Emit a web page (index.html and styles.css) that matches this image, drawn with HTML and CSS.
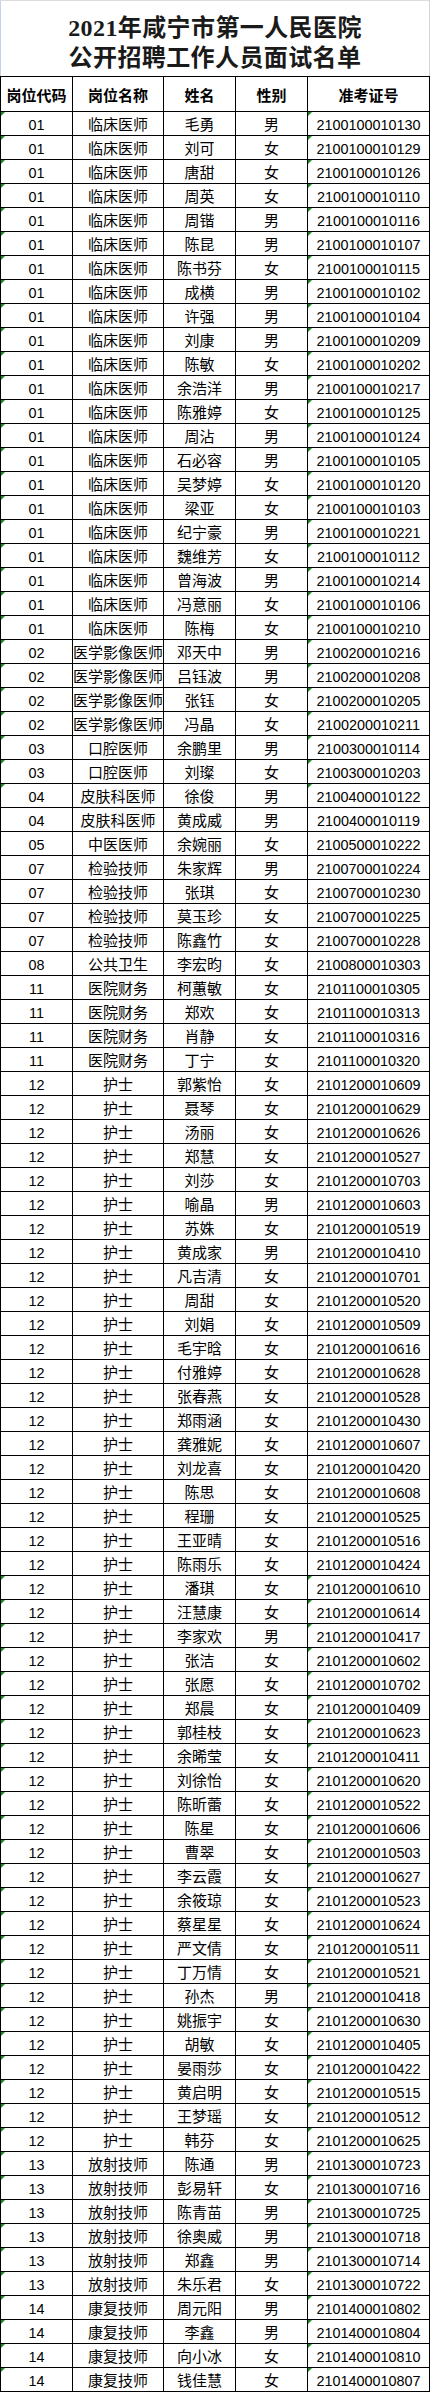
FILE: index.html
```html
<!DOCTYPE html>
<html lang="zh-CN">
<head>
<meta charset="utf-8">
<title>2021年咸宁市第一人民医院公开招聘工作人员面试名单</title>
<link rel="stylesheet" href="styles.css">
</head>
<body>
<div class="sheet">
  <div class="title">2021年咸宁市第一人民医院<br>公开招聘工作人员面试名单</div>
  <table class="list">
    <colgroup><col class="w1"><col class="w2"><col class="w3"><col class="w4"><col class="w5"></colgroup>
    <thead>
      <tr><th>岗位代码</th><th>岗位名称</th><th>姓名</th><th>性别</th><th>准考证号</th></tr>
    </thead>
    <tbody>
      <tr class="m"><td class="a">01</td><td>临床医师</td><td>毛勇</td><td>男</td><td class="e">2100100010130</td></tr>
      <tr class="m"><td class="a">01</td><td>临床医师</td><td>刘可</td><td>女</td><td class="e">2100100010129</td></tr>
      <tr class="m"><td class="a">01</td><td>临床医师</td><td>唐甜</td><td>女</td><td class="e">2100100010126</td></tr>
      <tr class="m"><td class="a">01</td><td>临床医师</td><td>周英</td><td>女</td><td class="e">2100100010110</td></tr>
      <tr class="m"><td class="a">01</td><td>临床医师</td><td>周锴</td><td>男</td><td class="e">2100100010116</td></tr>
      <tr class="m"><td class="a">01</td><td>临床医师</td><td>陈昆</td><td>男</td><td class="e">2100100010107</td></tr>
      <tr class="m"><td class="a">01</td><td>临床医师</td><td>陈书芬</td><td>女</td><td class="e">2100100010115</td></tr>
      <tr class="m"><td class="a">01</td><td>临床医师</td><td>成横</td><td>男</td><td class="e">2100100010102</td></tr>
      <tr class="m"><td class="a">01</td><td>临床医师</td><td>许强</td><td>男</td><td class="e">2100100010104</td></tr>
      <tr class="m"><td class="a">01</td><td>临床医师</td><td>刘康</td><td>男</td><td class="e">2100100010209</td></tr>
      <tr class="m"><td class="a">01</td><td>临床医师</td><td>陈敏</td><td>女</td><td class="e">2100100010202</td></tr>
      <tr class="m"><td class="a">01</td><td>临床医师</td><td>余浩洋</td><td>男</td><td class="e">2100100010217</td></tr>
      <tr class="m"><td class="a">01</td><td>临床医师</td><td>陈雅婷</td><td>女</td><td class="e">2100100010125</td></tr>
      <tr class="m"><td class="a">01</td><td>临床医师</td><td>周沾</td><td>男</td><td class="e">2100100010124</td></tr>
      <tr class="m"><td class="a">01</td><td>临床医师</td><td>石必容</td><td>男</td><td class="e">2100100010105</td></tr>
      <tr class="m"><td class="a">01</td><td>临床医师</td><td>吴梦婷</td><td>女</td><td class="e">2100100010120</td></tr>
      <tr class="m"><td class="a">01</td><td>临床医师</td><td>梁亚</td><td>女</td><td class="e">2100100010103</td></tr>
      <tr class="m"><td class="a">01</td><td>临床医师</td><td>纪宁豪</td><td>男</td><td class="e">2100100010221</td></tr>
      <tr class="m"><td class="a">01</td><td>临床医师</td><td>魏维芳</td><td>女</td><td class="e">2100100010112</td></tr>
      <tr class="m"><td class="a">01</td><td>临床医师</td><td>曾海波</td><td>男</td><td class="e">2100100010214</td></tr>
      <tr class="m"><td class="a">01</td><td>临床医师</td><td>冯意丽</td><td>女</td><td class="e">2100100010106</td></tr>
      <tr class="m"><td class="a">01</td><td>临床医师</td><td>陈梅</td><td>女</td><td class="e">2100100010210</td></tr>
      <tr class="m"><td class="a">02</td><td>医学影像医师</td><td>邓天中</td><td>男</td><td class="e">2100200010216</td></tr>
      <tr class="m"><td class="a">02</td><td>医学影像医师</td><td>吕钰波</td><td>男</td><td class="e">2100200010208</td></tr>
      <tr class="m"><td class="a">02</td><td>医学影像医师</td><td>张钰</td><td>女</td><td class="e">2100200010205</td></tr>
      <tr class="m"><td class="a">02</td><td>医学影像医师</td><td>冯晶</td><td>女</td><td class="e">2100200010211</td></tr>
      <tr class="m"><td class="a">03</td><td>口腔医师</td><td>余鹏里</td><td>男</td><td class="e">2100300010114</td></tr>
      <tr class="m"><td class="a">03</td><td>口腔医师</td><td>刘璨</td><td>女</td><td class="e">2100300010203</td></tr>
      <tr class="m"><td class="a">04</td><td>皮肤科医师</td><td>徐俊</td><td>男</td><td class="e">2100400010122</td></tr>
      <tr><td class="a">04</td><td>皮肤科医师</td><td>黄成威</td><td>男</td><td class="e">2100400010119</td></tr>
      <tr><td class="a">05</td><td>中医医师</td><td>余婉丽</td><td>女</td><td class="e">2100500010222</td></tr>
      <tr><td class="a">07</td><td>检验技师</td><td>朱家辉</td><td>男</td><td class="e">2100700010224</td></tr>
      <tr><td class="a">07</td><td>检验技师</td><td>张琪</td><td>女</td><td class="e">2100700010230</td></tr>
      <tr><td class="a">07</td><td>检验技师</td><td>莫玉珍</td><td>女</td><td class="e">2100700010225</td></tr>
      <tr><td class="a">07</td><td>检验技师</td><td>陈鑫竹</td><td>女</td><td class="e">2100700010228</td></tr>
      <tr><td class="a">08</td><td>公共卫生</td><td>李宏昀</td><td>女</td><td class="e">2100800010303</td></tr>
      <tr><td class="a">11</td><td>医院财务</td><td>柯蕙敏</td><td>女</td><td class="e">2101100010305</td></tr>
      <tr><td class="a">11</td><td>医院财务</td><td>郑欢</td><td>女</td><td class="e">2101100010313</td></tr>
      <tr><td class="a">11</td><td>医院财务</td><td>肖静</td><td>女</td><td class="e">2101100010316</td></tr>
      <tr><td class="a">11</td><td>医院财务</td><td>丁宁</td><td>女</td><td class="e">2101100010320</td></tr>
      <tr><td class="a">12</td><td>护士</td><td>郭紫怡</td><td>女</td><td class="e">2101200010609</td></tr>
      <tr><td class="a">12</td><td>护士</td><td>聂琴</td><td>女</td><td class="e">2101200010629</td></tr>
      <tr><td class="a">12</td><td>护士</td><td>汤丽</td><td>女</td><td class="e">2101200010626</td></tr>
      <tr><td class="a">12</td><td>护士</td><td>郑慧</td><td>女</td><td class="e">2101200010527</td></tr>
      <tr><td class="a">12</td><td>护士</td><td>刘莎</td><td>女</td><td class="e">2101200010703</td></tr>
      <tr><td class="a">12</td><td>护士</td><td>喻晶</td><td>男</td><td class="e">2101200010603</td></tr>
      <tr><td class="a">12</td><td>护士</td><td>苏姝</td><td>女</td><td class="e">2101200010519</td></tr>
      <tr><td class="a">12</td><td>护士</td><td>黄成家</td><td>男</td><td class="e">2101200010410</td></tr>
      <tr><td class="a">12</td><td>护士</td><td>凡吉清</td><td>女</td><td class="e">2101200010701</td></tr>
      <tr><td class="a">12</td><td>护士</td><td>周甜</td><td>女</td><td class="e">2101200010520</td></tr>
      <tr><td class="a">12</td><td>护士</td><td>刘娟</td><td>女</td><td class="e">2101200010509</td></tr>
      <tr><td class="a">12</td><td>护士</td><td>毛宇晗</td><td>女</td><td class="e">2101200010616</td></tr>
      <tr><td class="a">12</td><td>护士</td><td>付雅婷</td><td>女</td><td class="e">2101200010628</td></tr>
      <tr><td class="a">12</td><td>护士</td><td>张春燕</td><td>女</td><td class="e">2101200010528</td></tr>
      <tr><td class="a">12</td><td>护士</td><td>郑雨涵</td><td>女</td><td class="e">2101200010430</td></tr>
      <tr><td class="a">12</td><td>护士</td><td>龚雅妮</td><td>女</td><td class="e">2101200010607</td></tr>
      <tr><td class="a">12</td><td>护士</td><td>刘龙喜</td><td>女</td><td class="e">2101200010420</td></tr>
      <tr><td class="a">12</td><td>护士</td><td>陈思</td><td>女</td><td class="e">2101200010608</td></tr>
      <tr><td class="a">12</td><td>护士</td><td>程珊</td><td>女</td><td class="e">2101200010525</td></tr>
      <tr><td class="a">12</td><td>护士</td><td>王亚晴</td><td>女</td><td class="e">2101200010516</td></tr>
      <tr><td class="a">12</td><td>护士</td><td>陈雨乐</td><td>女</td><td class="e">2101200010424</td></tr>
      <tr class="m"><td class="a">12</td><td>护士</td><td>潘琪</td><td>女</td><td class="e">2101200010610</td></tr>
      <tr class="m"><td class="a">12</td><td>护士</td><td>汪慧康</td><td>女</td><td class="e">2101200010614</td></tr>
      <tr class="m"><td class="a">12</td><td>护士</td><td>李家欢</td><td>男</td><td class="e">2101200010417</td></tr>
      <tr class="m"><td class="a">12</td><td>护士</td><td>张洁</td><td>女</td><td class="e">2101200010602</td></tr>
      <tr class="m"><td class="a">12</td><td>护士</td><td>张愿</td><td>女</td><td class="e">2101200010702</td></tr>
      <tr class="m"><td class="a">12</td><td>护士</td><td>郑晨</td><td>女</td><td class="e">2101200010409</td></tr>
      <tr class="m"><td class="a">12</td><td>护士</td><td>郭桂枝</td><td>女</td><td class="e">2101200010623</td></tr>
      <tr class="m"><td class="a">12</td><td>护士</td><td>余晞莹</td><td>女</td><td class="e">2101200010411</td></tr>
      <tr class="m"><td class="a">12</td><td>护士</td><td>刘徐怡</td><td>女</td><td class="e">2101200010620</td></tr>
      <tr class="m"><td class="a">12</td><td>护士</td><td>陈昕蕾</td><td>女</td><td class="e">2101200010522</td></tr>
      <tr class="m"><td class="a">12</td><td>护士</td><td>陈星</td><td>女</td><td class="e">2101200010606</td></tr>
      <tr class="m"><td class="a">12</td><td>护士</td><td>曹翠</td><td>女</td><td class="e">2101200010503</td></tr>
      <tr class="m"><td class="a">12</td><td>护士</td><td>李云霞</td><td>女</td><td class="e">2101200010627</td></tr>
      <tr class="m"><td class="a">12</td><td>护士</td><td>余筱琼</td><td>女</td><td class="e">2101200010523</td></tr>
      <tr class="m"><td class="a">12</td><td>护士</td><td>蔡星星</td><td>女</td><td class="e">2101200010624</td></tr>
      <tr class="m"><td class="a">12</td><td>护士</td><td>严文倩</td><td>女</td><td class="e">2101200010511</td></tr>
      <tr class="m"><td class="a">12</td><td>护士</td><td>丁万情</td><td>女</td><td class="e">2101200010521</td></tr>
      <tr class="m"><td class="a">12</td><td>护士</td><td>孙杰</td><td>男</td><td class="e">2101200010418</td></tr>
      <tr class="m"><td class="a">12</td><td>护士</td><td>姚振宇</td><td>女</td><td class="e">2101200010630</td></tr>
      <tr class="m"><td class="a">12</td><td>护士</td><td>胡敏</td><td>女</td><td class="e">2101200010405</td></tr>
      <tr class="m"><td class="a">12</td><td>护士</td><td>晏雨莎</td><td>女</td><td class="e">2101200010422</td></tr>
      <tr class="m"><td class="a">12</td><td>护士</td><td>黄启明</td><td>女</td><td class="e">2101200010515</td></tr>
      <tr class="m"><td class="a">12</td><td>护士</td><td>王梦瑶</td><td>女</td><td class="e">2101200010512</td></tr>
      <tr class="m"><td class="a">12</td><td>护士</td><td>韩芬</td><td>女</td><td class="e">2101200010625</td></tr>
      <tr class="m"><td class="a">13</td><td>放射技师</td><td>陈通</td><td>男</td><td class="e">2101300010723</td></tr>
      <tr class="m"><td class="a">13</td><td>放射技师</td><td>彭易轩</td><td>女</td><td class="e">2101300010716</td></tr>
      <tr class="m"><td class="a">13</td><td>放射技师</td><td>陈青苗</td><td>男</td><td class="e">2101300010725</td></tr>
      <tr class="m"><td class="a">13</td><td>放射技师</td><td>徐奥威</td><td>男</td><td class="e">2101300010718</td></tr>
      <tr class="m"><td class="a">13</td><td>放射技师</td><td>郑鑫</td><td>男</td><td class="e">2101300010714</td></tr>
      <tr class="m"><td class="a">13</td><td>放射技师</td><td>朱乐君</td><td>女</td><td class="e">2101300010722</td></tr>
      <tr class="m"><td class="a">14</td><td>康复技师</td><td>周元阳</td><td>男</td><td class="e">2101400010802</td></tr>
      <tr class="m"><td class="a">14</td><td>康复技师</td><td>李鑫</td><td>男</td><td class="e">2101400010804</td></tr>
      <tr class="m"><td class="a">14</td><td>康复技师</td><td>向小冰</td><td>女</td><td class="e">2101400010810</td></tr>
      <tr class="m"><td class="a">14</td><td>康复技师</td><td>钱佳慧</td><td>女</td><td class="e">2101400010807</td></tr>
    </tbody>
  </table>
</div>
</body>
</html>
```
FILE: styles.css
```css
html, body {
  margin: 0;
  padding: 0;
  background: #ffffff;
}

.sheet {
  width: 430px;
  color: #000;
}

.title {
  height: 76px;
  box-sizing: border-box;
  padding-top: 12px;
  text-align: center;
  font-family: "Liberation Serif", "Noto Sans CJK SC", serif;
  font-weight: bold;
  font-size: 24px;
  line-height: 30px;
  letter-spacing: 0.4px;
  color: #1a1a1a;
  border-left: 1px solid #c7d2e4;
  border-top: 1px solid #dcdcdc;
  border-right: 1px solid #d4d4d4;
}

.list {
  width: 430px;
  border-collapse: collapse;
  table-layout: fixed;
}

.w1 { width: 72px; }
.w2 { width: 91px; }
.w3 { width: 72px; }
.w4 { width: 72px; }
.w5 { width: 122px; }

.list th,
.list td {
  border: 1px solid #000;
  padding: 0;
  text-align: center;
  white-space: nowrap;
  overflow: hidden;
  font-family: "Liberation Sans", "Noto Sans CJK SC", sans-serif;
  color: #000;
  box-sizing: border-box;
}

.list th {
  height: 35px;
  font-size: 15px;
  font-weight: bold;
  line-height: 20px;
  padding-top: 3px;
}

.list td {
  height: 24px;
  font-size: 15px;
  line-height: 20px;
  padding-top: 2px;
  position: relative;
}

.list td.a,
.list td.e {
  font-size: 14.4px;
}

.list tr.m td.a::before,
.list tr.m td.e::before {
  content: "";
  position: absolute;
  top: 0;
  left: 0;
  border-top: 4px solid #1f8a1f;
  border-right: 4px solid transparent;
}
```
